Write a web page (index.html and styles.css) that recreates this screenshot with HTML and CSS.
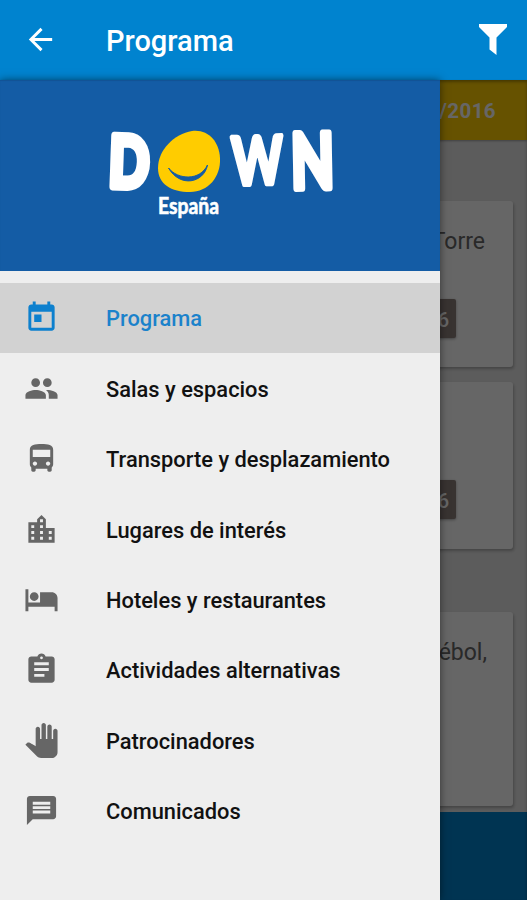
FILE: index.html
```html
<!DOCTYPE html>
<html lang="es">
<head>
<meta charset="utf-8">
<title>Programa</title>
<link rel="stylesheet" href="styles.css">
</head>
<body>
<div class="app">
  <header class="toolbar">
    <svg class="icon back" viewBox="0 0 24 24"><path d="M20 11H7.83l5.59-5.59L12 4l-8 8 8 8 1.41-1.41L7.83 13H20v-2z"/></svg>
    <h1>Programa</h1>
    <svg class="filter" viewBox="0 0 30 33"><path d="M1 1h28v3L18.500 14.500V32l-7-5.500V14.500L1 4z"/></svg>
  </header>
  <div class="stage">
    <main class="content">
      <div class="date">/2016</div>
      <div class="cards">
        <article class="card c1"><p>Torre</p><span class="chip">6</span></article>
        <article class="card c2"><span class="chip">6</span></article>
        <article class="card c3"><p>ébol,</p></article>
      </div>
      <footer class="bottom"></footer>
    </main>
    <div class="scrim"></div>
    <aside class="drawer">
      <div class="brand">
        <svg class="logo" viewBox="0 0 440 190">
          <g class="word">
            <text x="109" y="107" textLength="40" lengthAdjust="spacingAndGlyphs" font-size="70" stroke-width="8" transform="rotate(2 128 82)">D</text>
            <text x="232" y="104" textLength="51" lengthAdjust="spacingAndGlyphs" font-size="66" stroke-width="5" transform="rotate(-2 258 80)">W</text>
            <text x="291" y="108" textLength="43" lengthAdjust="spacingAndGlyphs" font-size="76" stroke-width="7" transform="rotate(-1 313 80)">N</text>
          </g>
          <path class="face" d="M192 51C208 49 219 61 220 78C221 97 208 112 190 112C171 112 158 104 158 88C158 70 174 54 192 51Z"/>
          <path class="smile" d="M168.500 88C178 100 200 101 207.500 85C204 103 180 108 168.500 88Z"/>
          <text class="country" x="158" y="134" textLength="61" lengthAdjust="spacingAndGlyphs">España</text>
        </svg>
      </div>
      <nav class="menu">
        <a class="item active"><svg class="icon" viewBox="0 0 24 24"><path d="M19 3h-1V1h-2v2H8V1H6v2H5c-1.110 0-1.990.9-1.990 2L3 19c0 1.100.89 2 2 2h14c1.100 0 2-.9 2-2V5c0-1.100-.9-2-2-2zm0 16H5V8h14v11zM7 10h5v5H7z"/></svg><span>Programa</span></a>
        <a class="item"><svg class="icon" viewBox="0 0 24 24"><path d="M16 11c1.660 0 2.990-1.340 2.990-3S17.660 5 16 5s-3 1.340-3 3 1.340 3 3 3zm-8 0c1.660 0 2.990-1.340 2.990-3S9.660 5 8 5 5 6.340 5 8s1.340 3 3 3zm0 2c-2.330 0-7 1.170-7 3.500V19h14v-2.500C15 14.170 10.330 13 8 13zm8 0c-.29 0-.62.02-.97.05 1.160.84 1.970 1.970 1.970 3.450V19h6v-2.500c0-2.330-4.670-3.500-7-3.500z"/></svg><span>Salas y espacios</span></a>
        <a class="item"><svg class="icon" viewBox="0 0 24 24"><path d="M4 16c0 .88.39 1.670 1 2.220V20c0 .55.45 1 1 1h1c.55 0 1-.45 1-1v-1h8v1c0 .55.45 1 1 1h1c.55 0 1-.45 1-1v-1.780c.61-.55 1-1.340 1-2.220V6c0-3.500-3.580-4-8-4s-8 .5-8 4v10zm3.500 1c-.83 0-1.500-.67-1.500-1.500S6.670 14 7.500 14s1.500.67 1.500 1.500S8.330 17 7.500 17zm9 0c-.83 0-1.500-.67-1.500-1.500s.67-1.500 1.500-1.500 1.500.67 1.500 1.500-.67 1.500-1.500 1.500zm1.500-6H6V6h12v5z"/></svg><span>Transporte y desplazamiento</span></a>
        <a class="item"><svg class="icon" viewBox="0 0 24 24"><path d="M15 11V5l-3-3-3 3v2H3v14h18V11h-6zm-8 8H5v-2h2v2zm0-4H5v-2h2v2zm0-4H5V9h2v2zm6 8h-2v-2h2v2zm0-4h-2v-2h2v2zm0-4h-2V9h2v2zm0-4h-2V5h2v2zm6 12h-2v-2h2v2zm0-4h-2v-2h2v2z"/></svg><span>Lugares de interés</span></a>
        <a class="item"><svg class="icon" viewBox="0 0 24 24"><path d="M7 13c1.660 0 3-1.340 3-3S8.660 7 7 7s-3 1.340-3 3 1.340 3 3 3zm12-6h-8v7H3V5H1v15h2v-3h18v3h2v-9c0-2.210-1.790-4-4-4z"/></svg><span>Hoteles y restaurantes</span></a>
        <a class="item"><svg class="icon" viewBox="0 0 24 24"><path d="M19 3h-4.180C14.400 1.840 13.300 1 12 1c-1.300 0-2.400.84-2.820 2H5c-1.100 0-2 .9-2 2v14c0 1.100.9 2 2 2h14c1.100 0 2-.9 2-2V5c0-1.100-.9-2-2-2zm-7 0c.55 0 1 .45 1 1s-.45 1-1 1-1-.45-1-1 .45-1 1-1zm2 14H7v-2h7v2zm3-4H7v-2h10v2zm0-4H7V7h10v2z"/></svg><span>Actividades alternativas</span></a>
        <a class="item"><svg class="icon" viewBox="0 0 24 24"><path d="M23 5.500V20c0 2.200-1.800 4-4 4h-7.300c-1.080 0-2.100-.43-2.850-1.190L1 14.830s1.260-1.230 1.300-1.250c.22-.19.49-.29.79-.29.22 0 .42.06.6.16.04.01 4.310 2.460 4.310 2.460V4c0-.83.67-1.500 1.500-1.500S11 3.170 11 4v7h1V1.500c0-.83.67-1.500 1.500-1.500S15 .67 15 1.500V11h1V2.500c0-.83.67-1.500 1.500-1.500s1.500.67 1.500 1.500V11h1V5.500c0-.83.67-1.500 1.500-1.500s1.500.67 1.500 1.500z"/></svg><span>Patrocinadores</span></a>
        <a class="item"><svg class="icon" viewBox="0 0 24 24"><path d="M20 2H4c-1.100 0-1.990.9-1.990 2L2 22l4-4h14c1.100 0 2-.9 2-2V4c0-1.100-.9-2-2-2zm-2 12H6v-2h12v2zm0-3H6V9h12v2zm0-3H6V6h12v2z"/></svg><span>Comunicados</span></a>
      </nav>
    </aside>
  </div>
</div>
</body>
</html>
```
FILE: styles.css
```css
* { box-sizing: border-box; }
body { margin: 0; font-family: Roboto, sans-serif; }
.app { width: 527px; height: 900px; display: flex; flex-direction: column; overflow: hidden; }
.toolbar { height: 80px; flex: none; display: flex; align-items: center; padding: 0 19px 0 23px; background: #0083cf; color: #fff; fill: #fff; }
.toolbar h1 { margin: 2px 0 0 48px; flex: 1; font-size: 29px; font-weight: 500; line-height: 36px; }
.icon { width: 35px; height: 35px; flex: none; display: block; }
.back { margin-top: -2px; }
.filter { width: 30px; height: 33px; margin-top: -2px; }
.stage { position: relative; flex: 1; }
.content { height: 820px; display: flex; flex-direction: column; background: #e6e6e6; }
.date { height: 60px; flex: none; padding-right: 31px; text-align: right; font-size: 20.500px; font-weight: 700; letter-spacing: .4px; line-height: 62px; color: #fff; background: #fc0; box-shadow: 0 1px 2px rgba(0,0,0,.3); }
.cards { flex: 1; padding: 61px 14px 0; }
.card { background: #fff; border-radius: 3px; box-shadow: 1px 2px 3px rgba(0,0,0,.25); display: flex; flex-direction: column; align-items: flex-end; }
.card p { margin: 0; padding: 25px 28px 0 0; font-size: 23px; line-height: 32px; color: #666; }
.card.c3 p { padding-right: 26px; }
.c1 { height: 166px; margin-bottom: 15px; }
.c2 { height: 167px; margin-bottom: 63px; }
.c3 { height: 194px; }
.chip { width: 70px; height: 39px; padding-right: 7px; text-align: right; font-size: 20px; font-weight: 500; line-height: 42px; color: #fff; background: #8d807c; border-radius: 2px; margin-right: 57px; box-shadow: 0 1px 3px rgba(0,0,0,.35); }
.c1 .chip { margin-top: 41px; }
.c2 .chip { margin-top: 98px; }
.bottom { height: 88px; flex: none; background: #0082cd; }
.scrim { position: absolute; inset: 0; background: rgba(0,0,0,.6); box-shadow: inset 0 2px 3px rgba(0,0,0,.3); }
.drawer { position: absolute; left: 0; top: 0; bottom: 0; width: 440px; background: #eee; box-shadow: 0 0 8px rgba(0,0,0,.5); }
.brand { height: 191px; background: #145ca5; box-shadow: inset 0 1px 1px rgba(0,0,0,.1); }
.logo { display: block; width: 440px; height: 190px; }
.word { fill: #fff; stroke: #fff; stroke-linejoin: round; font-family: Lato, sans-serif; font-weight: 700; }
.face { fill: #fc0; }
.smile { fill: #145ca5; stroke: #145ca5; stroke-width: 1px; stroke-linejoin: round; }
.country { fill: #fff; stroke: #fff; stroke-width: .6px; font-family: Lato, sans-serif; font-size: 22px; font-weight: 700; }
.menu { padding-top: 11.500px; }
.item { height: 70.450px; display: flex; align-items: center; padding-left: 24px; color: #111; fill: #666; font-size: 21.850px; font-weight: 500; }
.item span { margin: 2px 0 0 47px; }
.active { background: #d2d2d2; color: #1b82cb; fill: #0d80ce; }
```
